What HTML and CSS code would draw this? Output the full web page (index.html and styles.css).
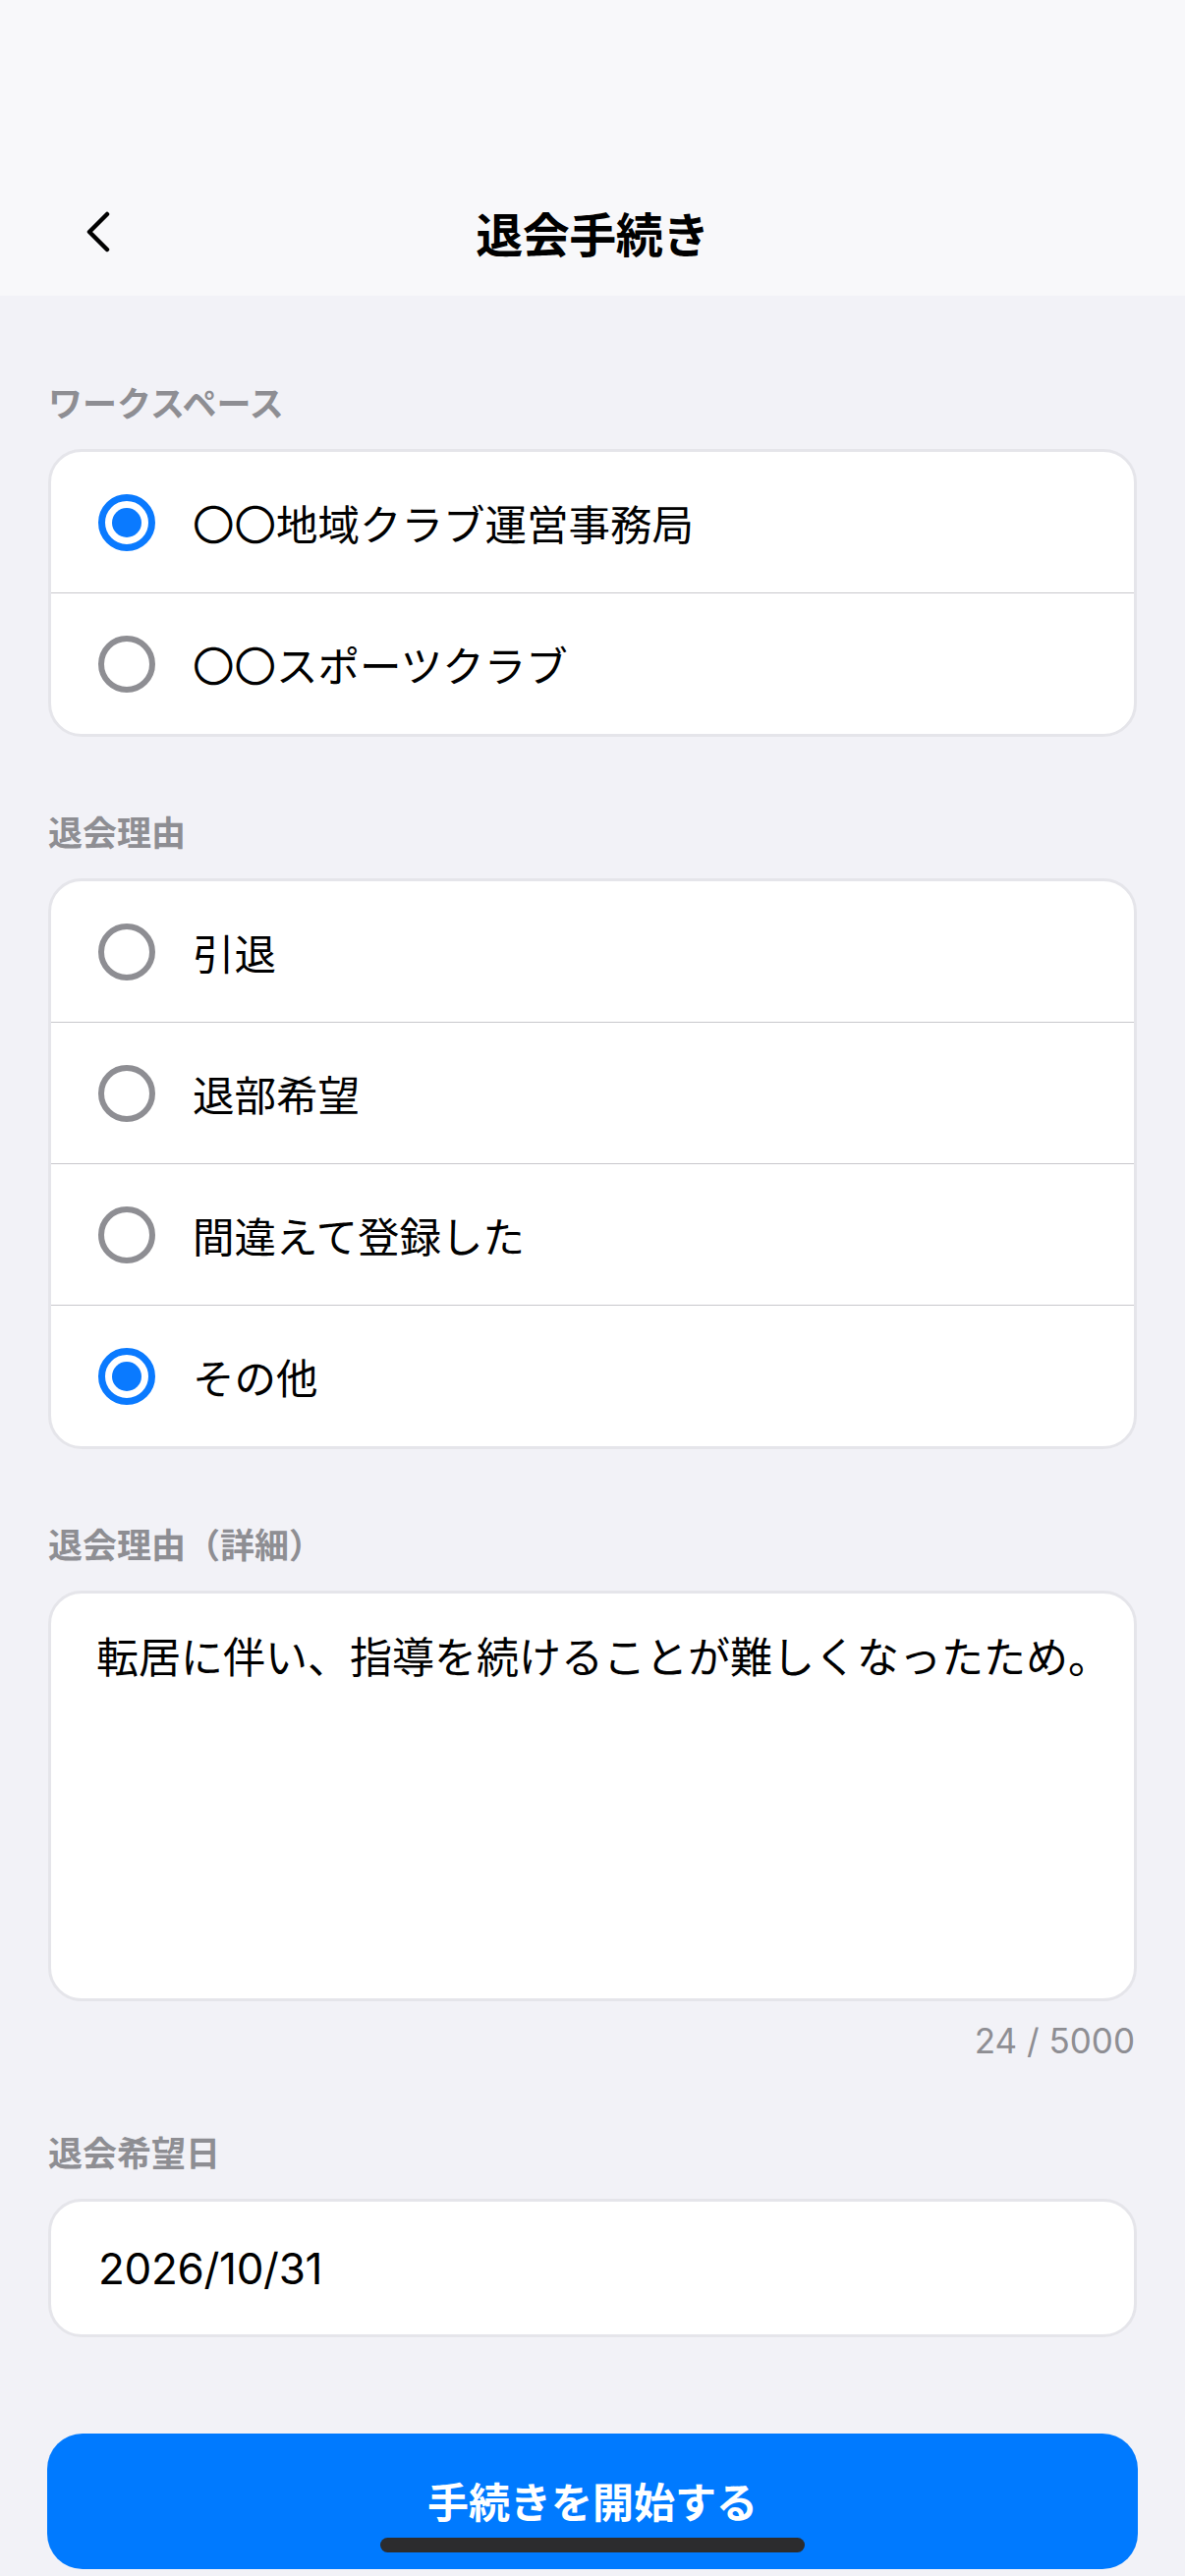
FILE: index.html
```html
<!DOCTYPE html>
<html lang="ja">
<head>
<meta charset="utf-8">
<title>退会手続き</title>
<link rel="stylesheet" href="styles.css">
</head>
<body>
<div class="screen">
  <header class="topbar">
    <div class="statusbar"></div>
    <nav class="navbar">
      <button class="back" aria-label="戻る">
        <svg width="30" height="44" viewBox="0 0 30 44"><path d="M24 4 L6 22 L24 40" fill="none" stroke="#000" stroke-width="4.5" stroke-linecap="round" stroke-linejoin="round"/></svg>
      </button>
      <h1 class="title">退会手続き</h1>
      <span class="nav-spacer"></span>
    </nav>
  </header>

  <main class="content">
    <section class="group">
      <div class="label">ワークスペース</div>
      <div class="card">
        <div class="row"><span class="radio checked"></span><span class="row-text">〇〇地域クラブ運営事務局</span></div>
        <div class="row"><span class="radio"></span><span class="row-text">〇〇スポーツクラブ</span></div>
      </div>
    </section>

    <section class="group">
      <div class="label">退会理由</div>
      <div class="card">
        <div class="row"><span class="radio"></span><span class="row-text">引退</span></div>
        <div class="row"><span class="radio"></span><span class="row-text">退部希望</span></div>
        <div class="row"><span class="radio"></span><span class="row-text">間違えて登録した</span></div>
        <div class="row"><span class="radio checked"></span><span class="row-text">その他</span></div>
      </div>
    </section>

    <section class="group">
      <div class="label">退会理由（詳細）</div>
      <div class="textarea">転居に伴い、指導を続けることが難しくなったため。</div>
      <div class="counter">24 / 5000</div>
    </section>

    <section class="group group-date">
      <div class="label">退会希望日</div>
      <div class="field">2026/10/31</div>
    </section>

    <div class="actions">
      <button class="primary">手続きを開始する</button>
    </div>
  </main>

  <div class="home-indicator"></div>
</div>
</body>
</html>
```

FILE: styles.css
```css
* { box-sizing: border-box; }

html, body {
  margin: 0;
  padding: 0;
}

body {
  width: 1206px;
  height: 2622px;
  overflow: hidden;
  background: #f2f2f7;
  font-family: "Noto Sans CJK JP", "Noto Sans", sans-serif;
  color: #000;
}

.screen {
  position: relative;
  width: 1206px;
  height: 2622px;
  background: #f2f2f7;
}

.topbar {
  background: #f8f8fa;
  height: 301px;
  display: flex;
  flex-direction: column;
}

.statusbar {
  height: 170px;
}

.navbar {
  height: 131px;
  display: grid;
  grid-template-columns: 1fr auto 1fr;
  align-items: center;
  padding: 0 85px;
}

.back {
  justify-self: start;
  background: none;
  border: 0;
  padding: 0;
  width: 30px;
  height: 44px;
  display: flex;
}

.title {
  margin: 0;
  font-size: 48px;
  font-weight: 700;
  line-height: 60px;
  letter-spacing: -0.5px;
}

.content {
  padding: 0 49px;
  display: flex;
  flex-direction: column;
}

.group {
  display: flex;
  flex-direction: column;
  margin-top: 75px;
}

.group:first-child {
  margin-top: 87px;
}

.group-date {
  margin-top: 70px;
}

.label {
  font-size: 35px;
  line-height: 42px;
  font-weight: 600;
  color: #8e8e93;
  margin-bottom: 27px;
}

.card {
  background: #fff;
  border: 3px solid #e5e5ea;
  border-radius: 34px;
  overflow: hidden;
}

.row {
  height: 143px;
  display: flex;
  align-items: center;
  padding-left: 48px;
  gap: 38px;
}

.row + .row {
  border-top: 1px solid #c8c7cc;
  height: 144px;
}

.radio {
  width: 58px;
  height: 58px;
  flex: none;
  border-radius: 50%;
  border: 6px solid #8e8e93;
  display: flex;
  align-items: center;
  justify-content: center;
}

.radio.checked {
  border: 7px solid #0a7aff;
}

.radio.checked::after {
  content: "";
  width: 30px;
  height: 30px;
  border-radius: 50%;
  background: #0a7aff;
}

.row-text {
  font-size: 42.5px;
  line-height: 58px;
}

.textarea {
  background: #fff;
  border: 3px solid #e5e5ea;
  border-radius: 34px;
  height: 418px;
  padding: 32px 12px 0 46px;
  font-size: 43px;
  line-height: 60px;
}

.counter {
  align-self: flex-end;
  margin-top: 18px;
  font-family: "Inter", "Liberation Sans", sans-serif;
  font-size: 35px;
  line-height: 44px;
  color: #8e8e93;
  padding-right: 2px;
}

.field {
  background: #fff;
  border: 3px solid #e5e5ea;
  border-radius: 34px;
  height: 141px;
  display: flex;
  align-items: center;
  padding-left: 48px;
  font-family: "Inter", "Liberation Sans", sans-serif;
  font-size: 44px;
  letter-spacing: -0.3px;
}

.actions {
  margin-top: 98px;
  display: flex;
}

.primary {
  flex: 1;
  margin: 0 -1px;
  height: 138px;
  border: 0;
  border-radius: 36px;
  background: #007aff;
  color: #fff;
  font-family: "Noto Sans CJK JP", sans-serif;
  font-size: 42px;
  font-weight: 700;
  padding-bottom: 4px;
}

.home-indicator {
  position: absolute;
  left: 387px;
  bottom: 24px;
  width: 432px;
  height: 15px;
  border-radius: 8px;
  background: #2c2c2e;
}
```
